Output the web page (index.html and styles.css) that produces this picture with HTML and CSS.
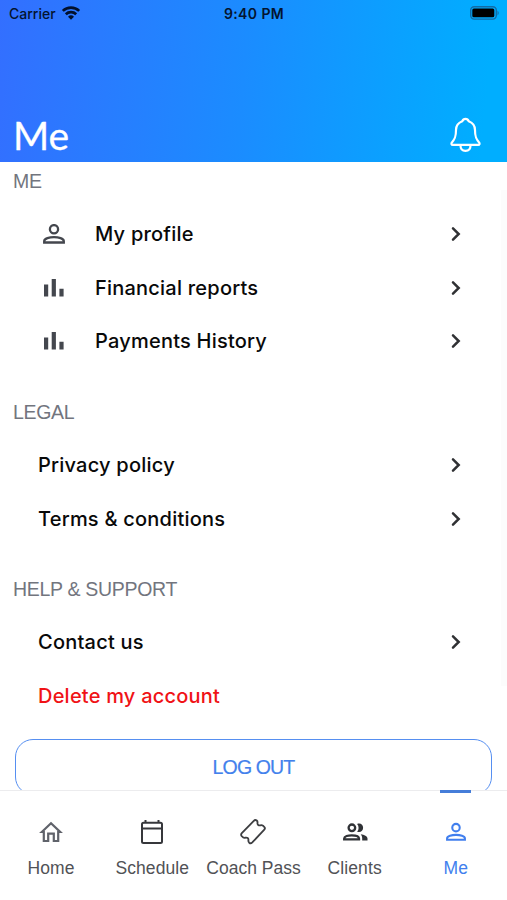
FILE: index.html
```html
<!DOCTYPE html>
<html lang="en">
<head>
<meta charset="utf-8">
<title>Me</title>
<link rel="stylesheet" href="styles.css">
</head>
<body>
<svg class="defs" width="0" height="0">
  <symbol id="person" viewBox="0 0 22 20"><circle cx="11" cy="5.200" r="4.100"/><path d="M1.200 18.500V17.200C1.200 14.500 6.500 13.200 11 13.200s9.800 1.300 9.800 4V18.500Z"/></symbol>
  <symbol id="bars" viewBox="0 0 20 18"><path d="M0 5.500H4.200V17.500H0ZM7.700 0H11.900V17.500H7.700ZM15.400 9.800H19.600V17.500H15.400Z"/></symbol>
  <symbol id="chevron" viewBox="0 0 10 16"><path d="M2 2.300L7.700 8L2 13.700"/></symbol>
</svg>
<div class="screen">
  <header class="header">
    <div class="status">
      <div class="carrier"><span class="carrier-name">Carrier</span>
        <svg class="wifi" width="20" height="16" viewBox="0 0 20 16"><path d="M1.800 5.900A11.800 11.800 0 0 1 18.200 5.900M4.800 9.200A7.500 7.500 0 0 1 15.200 9.200"/><path class="tip" d="M7 11.700A4.500 4.500 0 0 1 13 11.700L10 14.800Z"/></svg>
      </div>
      <span class="clock">9:40 PM</span>
      <svg class="battery" width="30" height="14" viewBox="0 0 30 14"><rect class="case" x="1.700" y="0.700" width="25.600" height="12.400" rx="3.500"/><rect x="3.300" y="2.500" width="22" height="8.800" rx="1.600"/><path class="cap" d="M28.500 4.500Q31 7 28.500 9.500Z"/></svg>
    </div>
    <div class="title-row">
      <h1>Me</h1>
      <svg class="bell" width="32" height="36" viewBox="0 0 32 36"><path d="M16.500 1.800C14.900 1.800 13.800 2.700 13.200 4.300C9 6 7 9 7 13C7 19.500 6.100 22 2.900 25.400C2 26.500 2.400 27.900 3.800 27.900H29.200C30.600 27.900 31 26.500 30.100 25.400C26.900 22 26 19.500 26 13C26 9 24 6 19.800 4.300C19.200 2.700 18.100 1.800 16.500 1.800ZM11.500 28.400C11.500 31.900 13.600 33.800 16.500 33.800S21.500 31.900 21.500 28.400"/></svg>
    </div>
  </header>
  <main class="content">
    <section>
      <h2>ME</h2>
      <a class="row with-icon"><svg class="person" width="22" height="20"><use href="#person"/></svg><span>My profile</span><svg class="chevron" width="10" height="16"><use href="#chevron"/></svg></a>
      <a class="row with-icon"><svg class="bars" width="20" height="18"><use href="#bars"/></svg><span>Financial reports</span><svg class="chevron" width="10" height="16"><use href="#chevron"/></svg></a>
      <a class="row with-icon"><svg class="bars" width="20" height="18"><use href="#bars"/></svg><span>Payments History</span><svg class="chevron" width="10" height="16"><use href="#chevron"/></svg></a>
    </section>
    <section>
      <h2>LEGAL</h2>
      <a class="row"><span>Privacy policy</span><svg class="chevron" width="10" height="16"><use href="#chevron"/></svg></a>
      <a class="row"><span>Terms &amp; conditions</span><svg class="chevron" width="10" height="16"><use href="#chevron"/></svg></a>
    </section>
    <section>
      <h2>HELP &amp; SUPPORT</h2>
      <a class="row"><span>Contact us</span><svg class="chevron" width="10" height="16"><use href="#chevron"/></svg></a>
      <a class="row danger"><span>Delete my account</span></a>
    </section>
    <button class="logout">LOG OUT</button>
    <div class="scrollbar"></div>
  </main>
  <nav class="tabs">
    <a class="tab"><span class="glyph"><svg class="home" width="24" height="22" viewBox="0 0 24 22"><path d="M2.800 11L12 2.200L21.200 11H19.200V20H14.800V12.600H9.200V20H4.800V11Z"/></svg></span><span>Home</span></a>
    <a class="tab"><span class="glyph"><svg class="calendar" width="24" height="26" viewBox="0 0 24 26"><rect x="2" y="3.800" width="20" height="20.200" rx="1.500"/><path d="M2 9.500H22M5.500 1V4M18.500 1V4"/></svg></span><span>Schedule</span></a>
    <a class="tab"><span class="glyph"><svg class="ticket" width="28" height="28" viewBox="0 0 28 28"><path d="M2.800 15.200L14.800 2.800Q16.200 1.300 17.700 2.500Q18.900 3.600 18.400 5Q18.500 7.700 21.300 7.400Q22.700 6.800 24 7.700L25.200 8.800Q26.600 10.200 25.300 11.600L13.300 24.400Q11.700 26 10.200 24.700Q9 23.400 9.500 22Q9.300 19.200 6.600 19.600Q5.200 20.200 3.900 19.200L2.700 18.100Q1.500 16.700 2.800 15.200Z"/></svg></span><span class="wide">Coach Pass</span></a>
    <a class="tab"><span class="glyph"><svg class="people" width="26" height="20" viewBox="0 0 26 20"><circle cx="9.900" cy="5.800" r="3.300"/><path d="M2.200 17.400V16.500C2.200 14.400 6.200 13.300 9.700 13.300S17 14.400 17 16.500V17.400Z"/><path class="solid" d="M15.100 1.900C18.500 0.600 21.100 2.700 21.100 5.800S18.500 11 15.100 9.700C17.100 7.500 17.100 4.100 15.100 1.900ZM18.700 12.300C22.300 12.900 25.500 14.300 25.500 16.500V18.500H20.200V16.500C20.200 14.700 19.800 13.500 18.700 12.300Z"/></svg></span><span>Clients</span></a>
    <a class="tab active"><span class="glyph"><svg class="person" width="20" height="20"><use href="#person"/></svg></span><span>Me</span></a>
  </nav>
</div>
</body>
</html>
```
FILE: styles.css
```css
* { box-sizing: border-box; }
body { margin: 0; background: #fff; font-family: Inter, sans-serif; }
.defs { position: absolute; }
svg { display: block; flex: none; fill: none; overflow: visible; }
.screen { width: 507px; height: 900px; display: flex; flex-direction: column; overflow: hidden; }

.header { height: 162px; flex: none; display: flex; flex-direction: column; justify-content: space-between; background: linear-gradient(95deg, #336fff 0%, #1b8cff 48%, #00aeff 95%); }
.status { height: 27px; padding: 0 8px 0 9px; display: grid; grid-template-columns: 1fr auto 1fr; align-items: center; font-size: 14px; color: #04142f; }
.carrier { display: flex; align-items: center; gap: 5px; }
.carrier-name { letter-spacing: 0; font-weight: 450; }
.wifi { stroke: #02112c; stroke-width: 2.700; margin-top: -2px; }
.wifi .tip { fill: #02112c; stroke: none; }
.clock { font-weight: 600; letter-spacing: 0.4px; }
.battery { justify-self: end; fill: #000; margin-top: -1px; }
.battery .case { fill: none; stroke: #126ca6; stroke-width: 1.400; }
.battery .cap { fill: #126ca6; }
.title-row { display: flex; justify-content: space-between; align-items: center; height: 54px; padding: 0 26px 0 13px; }
h1 { margin: 0; color: #fff; font: 400 39px/54px Lato, sans-serif; -webkit-text-stroke: 0.300px #fff; }
.bell { stroke: #fff; stroke-width: 2.200; stroke-linejoin: round; }

.content { flex: 1; min-height: 0; overflow: hidden; position: relative; }
section { height: 231px; }
section + section { height: 177px; }
h2 { margin: 0; padding: 0 13px; height: 45.200px; font: 400 19.500px/39px "Liberation Sans", sans-serif; color: #72757e; letter-spacing: -0.300px; }
.row { height: 53.700px; padding: 0 46px 0 38px; display: flex; align-items: center; justify-content: space-between; font-size: 20px; font-weight: 500; letter-spacing: 0.220px; color: #090909; }
.with-icon { display: grid; grid-template-columns: 57px 1fr auto; }
.danger { color: #f01216; }
.person { stroke: #44474e; stroke-width: 2.300; margin-left: 5px; }
.bars { fill: #44474e; margin-left: 6px; }
.chevron { stroke: #303134; stroke-width: 2.500; stroke-linecap: round; }
.logout { display: block; width: 477px; height: 56px; margin: -8px 0 0 15px; border: 1.500px solid #568ff1; border-radius: 18px; background: #fff; color: #4381ec; font: 400 19.500px "Liberation Sans", sans-serif; letter-spacing: -0.850px; -webkit-text-stroke: 0.200px #4381ec; }
.scrollbar { position: absolute; right: 0; top: 28px; width: 6px; height: 496px; background: #fcfcfc; }

.tabs { height: 110px; flex: none; display: grid; grid-template-columns: repeat(5, 101.200px); border-top: 1px solid #ececee; padding-left: 0.500px; background: #fff; }
.tab { position: relative; display: flex; flex-direction: column; align-items: center; color: #515256; font: 400 17.500px/24px "Liberation Sans", sans-serif; letter-spacing: 0.100px; white-space: nowrap; }
.wide { letter-spacing: 0; }
.glyph { height: 65px; display: flex; align-items: center; padding-top: 16px; }
.glyph .person { margin: 0; }
.home { stroke: #60636b; stroke-width: 2.200; }
.calendar { stroke: #36373b; stroke-width: 2; }
.ticket { stroke: #3d3e41; stroke-width: 1.800; stroke-linejoin: round; }
.people { stroke: #303236; stroke-width: 2.300; }
.people .solid { fill: #303236; stroke: none; }
.active { color: #417fee; }
.active .person { stroke: #417fee; }
.active::before { content: ""; position: absolute; top: -1px; width: 31px; height: 3px; background: #457dd9; }
```
